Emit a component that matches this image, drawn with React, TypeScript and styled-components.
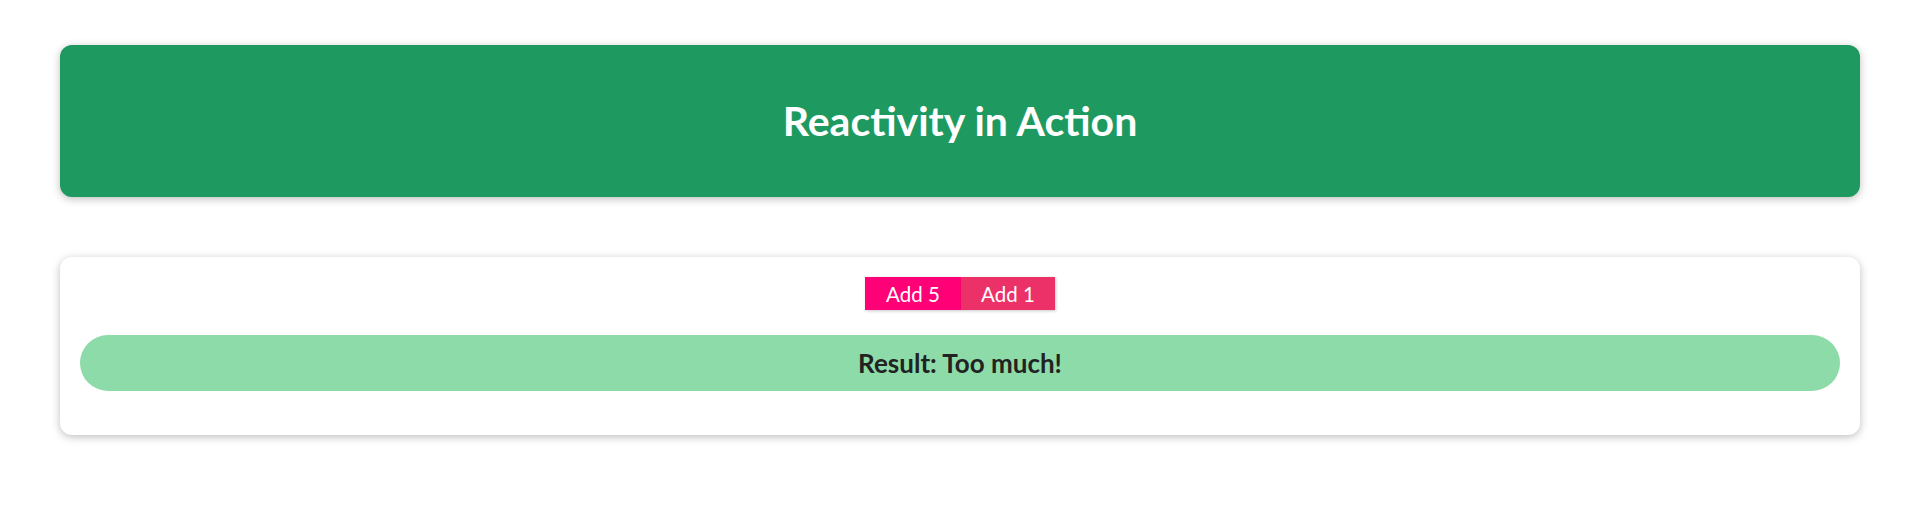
import styled, { createGlobalStyle } from 'styled-components';

const GlobalStyle = createGlobalStyle`
  * {
    box-sizing: border-box;
  }
  html, body {
    margin: 0;
    background: #ffffff;
    font-family: 'Lato', 'Noto Sans', sans-serif;
  }
`;

const Page = styled.main`
  display: flex;
  flex-direction: column;
  gap: 60px;
  padding: 45px 60px;
`;

const Header = styled.header`
  display: flex;
  align-items: center;
  justify-content: center;
  height: 152px;
  padding-bottom: 2px;
  border-radius: 12px;
  background-color: #1e9a60;
  color: #ffffff;
  box-shadow: 0 2px 8px rgba(0, 0, 0, 0.26);
`;

const Title = styled.h2`
  margin: 0;
  font-size: 41px;
  font-weight: 700;
`;

const Card = styled.section`
  display: flex;
  flex-direction: column;
  align-items: center;
  gap: 25px;
  padding: 20px 20px 44px;
  border-radius: 12px;
  background: #ffffff;
  box-shadow: 0 2px 8px rgba(0, 0, 0, 0.26);
`;

const ButtonRow = styled.div`
  display: flex;
`;

const Button = styled.button<{ $tone: string; $w: number }>`
  width: ${(p) => p.$w}px;
  height: 33px;
  padding: 0;
  border: none;
  background-color: ${(p) => p.$tone};
  color: #ffffff;
  font-family: 'Lato', 'Noto Sans', sans-serif;
  font-size: 20.5px;
  box-shadow: 1px 1px 3px rgba(0, 0, 0, 0.22);
  cursor: pointer;
`;

const Result = styled.p`
  display: flex;
  align-items: center;
  justify-content: center;
  width: 100%;
  height: 56px;
  margin: 0;
  border-radius: 28px;
  background-color: #8ddba8;
  color: #222222;
  font-size: 26px;
  font-weight: 700;
`;

export default function App() {
  return (
    <>
      <GlobalStyle />
      <Page>
        <Header>
          <Title>Reactivity in Action</Title>
        </Header>
        <Card>
          <ButtonRow>
            <Button $tone="#ff0077" $w={96}>Add 5</Button>
            <Button $tone="#ec3169" $w={94}>Add 1</Button>
          </ButtonRow>
          <Result>Result: Too much!</Result>
        </Card>
      </Page>
    </>
  );
}
